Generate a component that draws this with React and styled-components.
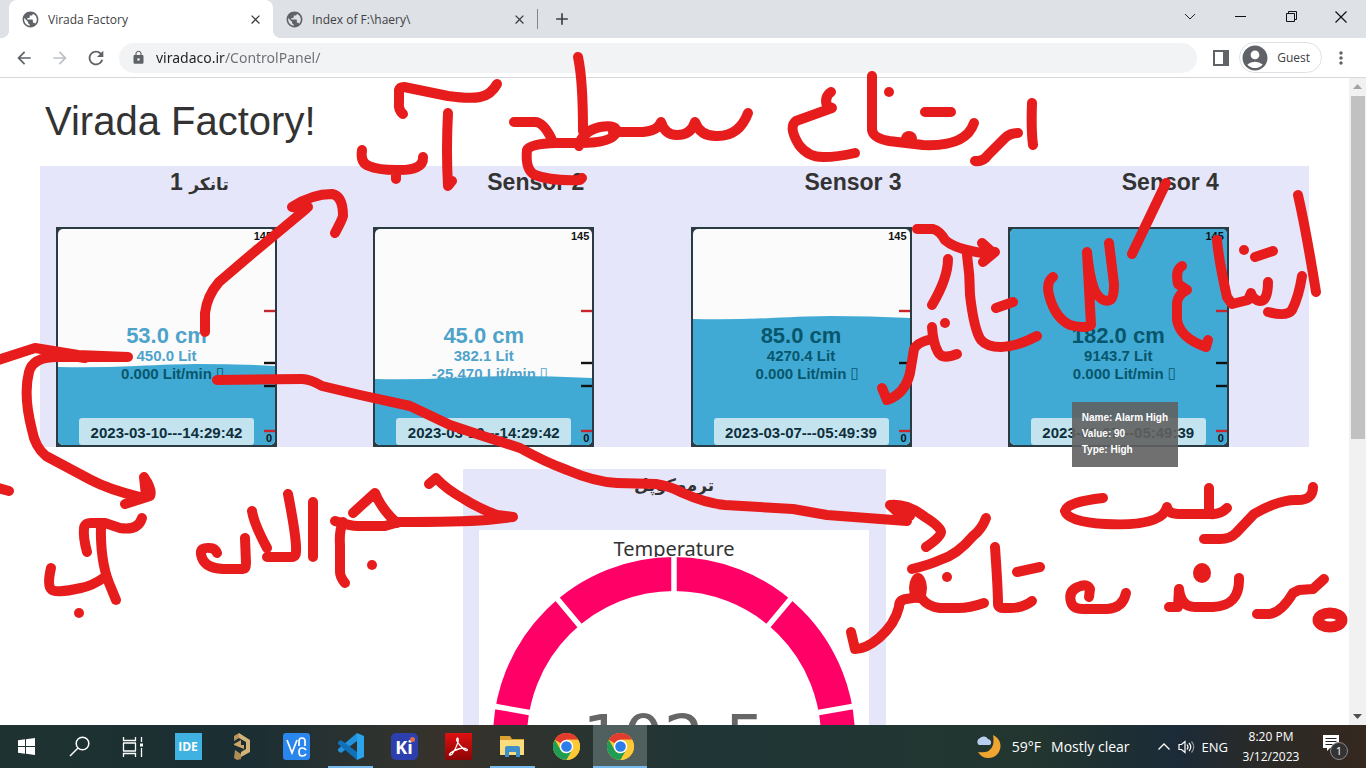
import React from "react";
import styled, { createGlobalStyle } from "styled-components";
import {
  MdPublic, MdLock, MdArrowBack, MdArrowForward, MdRefresh, MdMoreVert, MdAccountCircle, MdClose, MdAdd,
} from "react-icons/md";

const Global = createGlobalStyle`
  * { box-sizing: border-box; }
  body { margin: 0; background: #fff; font-family: "Liberation Sans", Arial, sans-serif; }
  button { border: 0; background: none; padding: 0; margin: 0; font: inherit; color: inherit; }
  h1, h2, h3 { margin: 0; }
`;

const uiFont = `"Open Sans", "Noto Sans", sans-serif`;

const Screen = styled.div`
  position: relative;
  display: flex;
  flex-direction: column;
  height: 100vh;
  overflow: hidden;
`;

/* ---------- browser frame ---------- */
const TabStrip = styled.div`
  display: flex;
  height: 38px;
  flex: none;
  padding-left: 9px;
  background: #dee1e6;
  font-family: ${uiFont};
`;
const Tab = styled.div`
  position: relative;
  display: flex;
  align-items: center;
  width: 264px;
  height: 38px;
  padding: 0 10px 0 12px;
  border-radius: 8px 8px 0 0;
  background: ${(p) => (p.$active ? "#fff" : "transparent")};
  color: #3c4043;
  font-size: 12px;
  svg { flex: none; }
  &::before, &::after {
    content: "";
    display: ${(p) => (p.$active ? "block" : "none")};
    position: absolute;
    bottom: 0;
    width: 8px;
    height: 8px;
  }
  &::before { left: -8px; background: radial-gradient(circle at 0 0, transparent 8px, #fff 8px); }
  &::after { right: -8px; background: radial-gradient(circle at 100% 0, transparent 8px, #fff 8px); }
`;
const TabTitle = styled.button`
  flex: 1;
  padding-left: 8px;
  text-align: left;
  white-space: nowrap;
`;
const IconButton = styled.button`
  display: flex;
  align-items: center;
  justify-content: center;
  flex: none;
  width: ${(p) => p.$w || 36}px;
  height: ${(p) => p.$h || 30}px;
  color: ${(p) => p.$color || "#5f6368"};
`;
const NewTab = styled(IconButton)`
  align-self: center;
  height: 20px;
  width: 48px;
  border-left: 1px solid #80868b;
`;
const WindowButtons = styled.div`
  display: flex;
  margin-left: auto;
  height: 33px;
`;
const Toolbar = styled.div`
  display: flex;
  align-items: center;
  flex: none;
  height: 40px;
  padding: 0 6px 0 6px;
  border-bottom: 1px solid #d5d7da;
  background: #fff;
  font-family: ${uiFont};
`;
const Address = styled.label`
  display: flex;
  flex: 1;
  align-items: center;
  gap: 10px;
  height: 30px;
  margin: 0 6px 0 5px;
  padding-left: 12px;
  border-radius: 15px;
  background: #f1f3f4;
  color: #5f6368;
`;
const UrlInput = styled.input`
  flex: 1;
  border: 0;
  padding: 0;
  outline: 0;
  font: 14px "Noto Sans", sans-serif;
  color: transparent;
  background: linear-gradient(to right, #202124 69px, #6a6e73 69px);
  -webkit-background-clip: text;
  background-clip: text;
`;
const Profile = styled.button`
  display: flex;
  align-items: center;
  gap: 7px;
  height: 31px;
  padding: 0 11px 0 0;
  border: 1px solid #dfe1e5;
  border-radius: 16px;
  color: #3c4043;
  font-size: 12px;
  svg { color: #5f6368; }
`;

/* ---------- page ---------- */
const Viewport = styled.div`
  display: flex;
  flex: 1;
  min-height: 0;
`;
const Page = styled.main`
  flex: 1;
  min-width: 0;
  overflow: hidden;
  padding: 20px 40px 0;
  color: #333;
`;
const PageTitle = styled.h1`
  padding-left: 5px;
  height: 68px;
  font-size: 40px;
  line-height: 46px;
  font-weight: 400;
`;
const TankRow = styled.section`
  display: grid;
  grid-template-columns: repeat(4, 1fr);
  background: #e6e6fa;
`;
const TankCell = styled.article`
  padding-left: 16px;
`;
const PanelTitle = styled.h2`
  height: 32px;
  margin-bottom: 29px;
  padding-left: 114px;
  font-size: 23px;
  line-height: 32px;
  white-space: nowrap;
`;
const Persian = styled.span`
  font-family: "DejaVu Sans", sans-serif;
  font-size: 17px;
`;
const TankBox = styled.div`
  position: relative;
  display: flex;
  flex-direction: column;
  align-items: center;
  width: 221px;
  height: 220px;
  padding-top: 98px;
`;
const TankDrawing = styled.svg`
  position: absolute;
  inset: 0;
`;
const Reading = styled.div`
  position: relative;
  font-size: ${(p) => (p.$big ? 22 : 15)}px;
  line-height: ${(p) => (p.$big ? 22 : 18)}px;
  font-weight: 700;
  color: ${(p) => (p.$wet ? "#08566c" : "#4fa3ca")};
  white-space: nowrap;
`;
const UnitBox = styled.span`
  position: absolute;
  left: 100%;
  padding-left: 4px;
  font: 15px/16px "DejaVu Sans", sans-serif;
`;
const Stamp = styled.time`
  position: relative;
  width: 175px;
  height: 27px;
  margin-top: 35px;
  border-radius: 3px;
  background: #c3e3ef;
  color: #0f2f3c;
  font-size: 15px;
  line-height: 29px;
  font-weight: 700;
  text-align: center;
`;
const ScaleLabel = styled.span`
  position: absolute;
  right: 5px;
  ${(p) => (p.$bottom ? "bottom: 2px" : "top: 3px")};
  color: #111;
  font-size: 11px;
  line-height: 13px;
  font-weight: 700;
`;
const Tooltip = styled.div`
  position: absolute;
  left: 64px;
  top: 175px;
  padding: 8px 10px 9px;
  background: rgba(97, 97, 97, 0.9);
  color: #fff;
  font-size: 10px;
  line-height: 16px;
  font-weight: 700;
  white-space: nowrap;
`;
const ThermoPanel = styled.section`
  width: calc(100% / 3);
  margin: 22px auto 0;
  padding: 0 17px 16px 16px;
  background: #e6e6fa;
`;
const ThermoTitle = styled.h2`
  height: 32px;
  margin-bottom: 29px;
  line-height: 28px;
  text-align: center;
`;
const ThermoCard = styled.div`
  display: flex;
  flex-direction: column;
  align-items: center;
  background: #fff;
`;
const ThermoLabel = styled.h3`
  height: 27px;
  padding-top: 7px;
  font: 400 20px/24px "Noto Sans", sans-serif;
`;
const Dial = styled.svg`
  background: #fff;
`;
const Scrollbar = styled.div`
  display: flex;
  flex-direction: column;
  align-items: center;
  flex: none;
  width: 17px;
  background: #f1f1f1;
`;
const Thumb = styled.div`
  width: 14px;
  height: 53%;
  margin-bottom: auto;
  background: #c1c1c1;
`;

/* ---------- taskbar ---------- */
const Taskbar = styled.footer`
  display: flex;
  flex: none;
  height: 43px;
  color: #fff;
  font-family: ${uiFont};
  background: linear-gradient(to right, #1e3331 0, #1b2e33 18%, #2b3230 26%, #38322a 33%, #2d332f 40%, #1f3536 52%, #213632 66%, #23352f 76%, #1b2b38 86%, #2a2a28 92%, #35281f 100%);
`;
const Apps = styled.nav`
  display: flex;
  padding-left: 2px;
`;
const TaskButton = styled.button`
  display: flex;
  align-items: center;
  justify-content: center;
  width: ${(p) => (p.$system ? 53 : 54)}px;
  background: ${(p) => (p.$active ? "#50605f" : "transparent")};
  position: relative;
  &::after {
    content: "";
    display: ${(p) => (p.$open ? "block" : "none")};
    position: absolute;
    bottom: 0;
    left: ${(p) => (p.$active ? 0 : 5)}px;
    right: ${(p) => (p.$active ? 0 : 4)}px;
    height: 2px;
    background: #76b9ed;
  }
`;
const Tile = styled.span`
  display: flex;
  align-items: center;
  justify-content: center;
  position: relative;
  width: 27px;
  height: 27px;
  border-radius: ${(p) => p.$r || 0}px;
  background: ${(p) => p.$bg};
  font: 700 ${(p) => p.$size}px ${uiFont};
`;
const KiDot = styled.i`
  position: absolute;
  top: 4px;
  right: 3px;
  width: 5px;
  height: 5px;
  border-radius: 50%;
  background: #d9704a;
`;
const Tray = styled.div`
  display: flex;
  align-items: center;
  margin-left: auto;
  padding-right: 17px;
  font-size: 12px;
`;
const Weather = styled.button`
  display: flex;
  align-items: center;
  gap: 10px;
  margin-right: 26px;
  font-size: 14px;
  white-space: nowrap;
`;
const Language = styled.button`
  font-size: 13px;
`;
const Clock = styled.button`
  width: 60px;
  margin: 0 20px 0 13px;
  font-size: 12px;
  line-height: 20px;
  text-align: center;
  white-space: nowrap;
`;
const Ink = styled.svg`
  position: absolute;
  inset: 0;
  width: 100%;
  height: 100%;
  pointer-events: none;
`;

const ChromeLogo = () => (
  <svg width="27" height="27" viewBox="0 0 48 48">
    <circle cx="24" cy="24" r="24" fill="#fcc934" />
    <path d="M24 24 3.200 12A24 24 0 0 1 44.800 12H24z" fill="#e33b2e" />
    <path d="M3.200 12 13.600 30A12 12 0 0 0 24 36L34.400 30 24 48A24 24 0 0 1 3.200 12z" fill="#1f9d55" />
    <path d="M24 24h10.400v6L24 48a24 24 0 0 0 20.800-36H24z" fill="#fcc934" />
    <circle cx="24" cy="24" r="12" fill="#fff" />
    <circle cx="24" cy="24" r="9.400" fill="#2b7de9" />
  </svg>
);

const systemButtons = [
  ["Start", <svg width="17" height="17" viewBox="0 0 17 17" fill="#fff"><path d="M0 2.300 7 1.300V8H0zM8 1.200 17 0v8H8zM0 9h7v6.700l-7-1zM8 9h9v8l-9-1.200z" /></svg>],
  ["Search", <svg width="21" height="21" viewBox="0 0 21 21" fill="none" stroke="#fff" strokeWidth="1.500"><circle cx="13.500" cy="7.500" r="6.300" /><path d="M9 12 1 20" /></svg>],
  ["Task view", <svg width="22" height="20" viewBox="0 0 22 20" fill="none" stroke="#fff" strokeWidth="1.300"><path d="M1.500 0v3.500h12V0M1.500 20v-3.500h12V20M1.500 6v8M13.500 6v8M1 6h13M1 14h13M19.500 0v5M19.500 11v9" /><path d="M18 6.500h3v3h-3z" fill="#fff" stroke="none" /></svg>],
];

const apps = [
  { name: "IDE", icon: <Tile $bg="#3fb2e2" $size={12}>IDE</Tile> },
  { name: "Altium", icon: (
    <svg width="18" height="27" viewBox="0 0 18 27"><path d="M6 0 17 7v12L8 24V19l5-3V9L6 5z" fill="#d3b377" /><path d="M1 3 6 0v5L1 8z" fill="#b9935a" /><path d="M1 11 8 7v5h3v4L1 12z" fill="#c9a664" /><path d="M2 17 8 21v5l-4 1-3-2z" fill="#b08d55" /></svg>
  ) },
  { name: "VNC", icon: (
    <Tile $bg="#2a86ec" $r={3}>
      <svg width="23" height="23" viewBox="0 0 23 23" fill="none" stroke="#fff" strokeWidth="1.700"><path d="m2 5 5 13L12 5M14 11V6q0-3 3-3t3 3v5M21 15q-1-2-4-2-3 0-3 4t3 4q3 0 4-2" /></svg>
    </Tile>
  ) },
  { name: "Visual Studio Code", open: true, icon: (
    <svg width="27" height="27" viewBox="0 0 27 27"><path d="M20 0 27 3v21l-7 3z" fill="#2ba4ec" /><path d="M20 0v8L4 20l-3-2v-2z" fill="#2392dc" /><path d="M20 27v-8L4 7 1 9v2z" fill="#1071b8" /></svg>
  ) },
  { name: "KiCad", icon: <Tile $bg="#2d3fae" $r={5} $size={18}>Ki<KiDot /></Tile> },
  { name: "Acrobat", icon: (
    <Tile $bg="linear-gradient(#e01010, #8c0505)" $r={1}>
      <svg width="20" height="19" viewBox="0 0 20 19" fill="none" stroke="#fff" strokeWidth="1.300"><path d="M9.500 1c-3 2 3 8 6 11s5 1 3 0c-3-2-11 0-16 4-3 3 1 3 3-1C8 11 12 2 9.500 1z" /></svg>
    </Tile>
  ) },
  { name: "File Explorer", open: true, icon: (
    <svg width="25" height="21" viewBox="0 0 25 21"><path d="M0 0h10l2 3h12v16H0z" fill="#dba233" /><path d="M0 4h24v15H0z" fill="#f9dc7d" /><path d="M5 21V12q0-2 2-2h11q2 0 2 2v9h-4v-5H9v5z" fill="#3f8fc9" /></svg>
  ) },
  { name: "Chrome", icon: <ChromeLogo /> },
  { name: "Chrome window", open: true, active: true, icon: <ChromeLogo /> },
];

const tanks = [
  { title: "1", persian: "تانکر", cm: "53.0", lit: "450.0", rate: "0.000", stamp: "2023-03-10---14:29:42", level: 140, wet: 1 },
  { title: "Sensor 2", cm: "45.0", lit: "382.1", rate: "-25.470", stamp: "2023-03-10---14:29:42", level: 152, wet: 0 },
  { title: "Sensor 3", cm: "85.0", lit: "4270.4", rate: "0.000", stamp: "2023-03-07---05:49:39", level: 92, wet: 3 },
  { title: "Sensor 4", cm: "182.0", lit: "9143.7", rate: "0.000", stamp: "2023-03-07---05:49:39", level: 0, wet: 3, tip: true },
];

const ticks = [[84, "#c8252c"], [136, "#111"], [159, "#111"], [204, "#c8252c"]];

function Tank({ data, index }) {
  const y = data.level;
  return (
    <TankCell>
      <PanelTitle>{data.persian ? <bdo dir="ltr">{data.title} <Persian lang="fa" dir="rtl">{data.persian}</Persian></bdo> : data.title}</PanelTitle>
      <TankBox>
        <TankDrawing width="221" height="220" viewBox="0 0 221 220" aria-hidden="true">
          <clipPath id={`tank${index}`}><rect x="2" y="2" width="217" height="216" rx="5" /></clipPath>
          <rect width="221" height="220" fill="#2b3b43" />
          <g clipPath={`url(#tank${index})`}>
            <rect width="221" height="220" fill="#fbfbfb" />
            <path d={y ? `M0 ${y}Q40 ${y + 1} 80 ${y - 1}T140 ${y - 3}Q180 ${y - 3} 221 ${y - 1}V220H0z` : "M0 0H221V220H0z"} fill="#40aad5" />
          </g>
          {ticks.map(([ty, color]) => <path key={ty} d={`M208 ${ty}h11`} stroke={color} strokeWidth="2.400" />)}
        </TankDrawing>
        <ScaleLabel>145</ScaleLabel>
        <ScaleLabel $bottom>0</ScaleLabel>
        <Reading $big $wet={data.wet > 2}>{data.cm} cm</Reading>
        <Reading $wet={data.wet > 1}>{data.lit} Lit</Reading>
        <Reading $wet={data.wet > 0}>{data.rate} Lit/min<UnitBox>▯</UnitBox></Reading>
        <Stamp>{data.stamp}</Stamp>
        {data.tip && <Tooltip role="tooltip">Name: Alarm High<br />Value: 90<br />Type: High</Tooltip>}
      </TankBox>
    </TankCell>
  );
}

const gaps = [0, 40, 80, 120, 160, 200, 240, 280, 320];

const strokes = [
  "M403 114Q398 110 399 102V90Q400 87 404 87L448 96Q470 99 480 97 491 95 497 84",
  "M448 113Q446 150 448 186L452 181",
  "M362 150Q360 163 369 166 378 170 396 170 424 171 423 157M396 170v9",
  "M514 122H535Q544 122 553 142M578 57Q583 80 583 131M579 146Q582 131 600 127 618 124 616 133 611 143 580 143H556Q529 144 527 150 525 170 535 175 550 181 580 180L582 178",
  "M613 132H635Q657 133 661 122 665 135 677 135 691 135 695 122 700 136 716 136 739 137 748 113",
  "M831 92Q824 97 827 106L832 108 796 121Q788 127 799 145 808 157 823 157 838 157 855 153",
  "M872 76V130Q873 138 889 141L923 145Q966 147 974 123M909 138v5M925 112H951",
  "M1018 133Q1010 133 1005 138L988 155Q983 162 975 161M1032 103Q1031 130 1033 145",
  "M205 332V313Q207 296 219 282L253 253 306 209 292 207Q312 194 332 194 343 196 343 216 342 220 335 233M300 207h8",
  "M-5 361 35 348 78 355 128 357H60Q33 356 29 372 23 395 32 430 35 447 46 456L91 480Q110 490 140 497M125 504 150 496Q153 490 144 477L146 496M60 354l25 4M-5 487 9 491",
  "M217 380 302 379Q310 379 322 386L360 395 410 406 450 425 480 435 520 448Q545 462 567 470 595 482 617 483L656 484Q670 486 683 493 705 503 725 505L793 509 827 515 867 518 907 521 890 505Q907 503 925 517 941 527 941 532 941 537 926 547M900 508l10 8",
  "M917 229H933Q940 231 945 240 955 249 982 253L995 252 983 262M982 243 992 252",
  "M948 259Q948 278 932 305M967 255Q970 275 970 295 974 330 981 340 987 347 1001 347 1016 347 1037 336M996 308 1013 302",
  "M932 327Q933 343 938 352 942 360 957 354M928 340Q917 343 914 349L910 373Q905 394 887 400L882 388",
  "M1053 277Q1046 282 1049 295 1055 318 1070 325 1085 329 1091 325L1087 252Q1090 282 1096 293 1103 303 1110 300 1114 299 1114 284L1109 243M1166 183 1132 254",
  "M1182 266Q1175 270 1178 284L1187 290Q1178 294 1177 303V320Q1180 338 1206 347L1208 340",
  "M1217 240Q1219 262 1227 297L1232 304 1248 300 1251 293Q1253 300 1260 301 1268 301 1268 282M1255 257 1273 251M1302 276Q1299 296 1292 310 1287 317 1268 312M1298 195Q1306 230 1316 292",
  "M87 552Q83 537 84 529 84 523 91 523H105L120 528Q138 531 142 518M101 525Q100 560 109 583L116 600M51 568Q47 585 51 589 54 594 81 588 92 586 105 577",
  "M217 553Q215 548 210 548 200 547 201 554 203 568 223 569H243Q246 569 246 563L245 538M252 511Q254 524 267 548M288 494Q297 540 296 552 296 557 292 557H267M313 502V557",
  "M335 521Q350 526 358 526H385L399 522Q460 522 487 520L513 517 497 515Q480 509 464 499 446 489 436 478L429 484M353 513 375 493Q382 510 397 523M343 522Q339 531 340 545V572Q340 577 345 583",
  "M1313 487Q1313 500 1298 500 1280 499 1254 514L1236 533Q1230 539 1220 539H1204",
  "M1103 498Q1067 502 1065 511 1068 522 1105 524 1162 527 1167 507 1168 514 1179 514H1210Q1220 515 1227 508M1209 488V511",
  "M986 518Q982 529 973 536 957 555 940 560 929 565 912 569M918 579Q916 605 940 608H958Q970 608 984 603M920 597 906 599Q899 600 899 607 895 624 879 638 866 649 855 649L851 632",
  "M995 547Q998 590 998 604 998 608 1004 608H1010Q1023 608 1032 601M1017 572 1040 567",
  "M1089 597 1090 589Q1087 583 1078 587 1068 591 1071 602 1073 609 1083 609H1107Q1123 608 1126 593",
  "M1169 607H1178L1179 589Q1181 607 1195 607H1213Q1240 606 1239 578M1257 614H1269Q1281 613 1293 593L1299 590 1313 589 1324 579",
];
const dots = [[889, 92, 5], [909, 139, 8], [945, 323, 5], [1244, 250, 5], [79, 613, 5], [372, 565, 5], [947, 577, 5]];

export default function App() {
  return (
    <Screen>
      <Global />
      <TabStrip>
        <Tab $active>
          <MdPublic size={19} color="#5f6368" />
          <TabTitle>Virada Factory</TabTitle>
          <IconButton $w={16} $color="#3c4043" aria-label="Close tab"><MdClose size={15} /></IconButton>
        </Tab>
        <Tab>
          <MdPublic size={19} color="#5f6368" />
          <TabTitle>Index of F:\haery\</TabTitle>
          <IconButton $w={16} $color="#3c4043" aria-label="Close tab"><MdClose size={15} /></IconButton>
        </Tab>
        <NewTab $color="#3c4043" aria-label="New tab"><MdAdd size={20} /></NewTab>
        <WindowButtons>
          <IconButton $w={51} $h={33} aria-label="Search tabs"><svg width="12" height="7" viewBox="0 0 12 7" fill="none" stroke="#222"><path d="m1 1 5 5 5-5" /></svg></IconButton>
          <IconButton $w={51} $h={33} aria-label="Minimize"><svg width="11" height="2" viewBox="0 0 11 2"><path d="M0 0h11v1H0z" fill="#111" /></svg></IconButton>
          <IconButton $w={50} $h={33} aria-label="Restore"><svg width="11" height="11" viewBox="0 0 11 11" fill="none" stroke="#111"><path d="M.5 2.500h8v8h-8zM2.500 2.500v-2h8v8h-2" /></svg></IconButton>
          <IconButton $w={50} $h={33} aria-label="Close window"><svg width="12" height="12" viewBox="0 0 12 12" stroke="#111" strokeWidth="1.200"><path d="m.5.5 11 11m0-11-11 11" /></svg></IconButton>
        </WindowButtons>
      </TabStrip>
      <Toolbar>
        <IconButton aria-label="Back"><MdArrowBack size={20} /></IconButton>
        <IconButton $color="#bdc1c6" aria-label="Forward"><MdArrowForward size={20} /></IconButton>
        <IconButton aria-label="Reload"><MdRefresh size={22} /></IconButton>
        <Address>
          <MdLock size={15} />
          <UrlInput aria-label="Address" defaultValue="viradaco.ir/ControlPanel/" />
        </Address>
        <IconButton aria-label="Side panel"><svg width="16" height="16" viewBox="0 0 16 16"><path d="M0 0h16v16H0zM2 2v12h8V2z" fill="#5f6368" fillRule="evenodd" /></svg></IconButton>
        <Profile><MdAccountCircle size={30} />Guest</Profile>
        <IconButton $w={38} aria-label="Menu"><MdMoreVert size={20} /></IconButton>
      </Toolbar>

      <Viewport>
        <Page>
          <PageTitle>Virada Factory!</PageTitle>
          <TankRow>{tanks.map((t, i) => <Tank key={t.title} data={t} index={i} />)}</TankRow>
          <ThermoPanel>
            <ThermoTitle><Persian lang="fa" dir="rtl">ترموکوپل</Persian></ThermoTitle>
            <ThermoCard>
              <ThermoLabel>Temperature</ThermoLabel>
              <Dial width="362" height="362" viewBox="-181 -181 362 362">
                <circle r="164" fill="none" stroke="#ff0066" strokeWidth="34" />
                {gaps.map((a) => <path key={a} d="M0-184V-144" stroke="#fff" strokeWidth="5.500" transform={`rotate(${a})`} />)}
                <text y="23" textAnchor="middle" fontFamily="DejaVu Sans, sans-serif" fontSize="64" fill="#666">102.5</text>
              </Dial>
            </ThermoCard>
          </ThermoPanel>
        </Page>
        <Scrollbar aria-hidden="true">
          <svg width="17" height="18" viewBox="0 0 17 18"><path d="m4 11 4.500-5 4.500 5z" fill="#a3a3a3" /></svg>
          <Thumb />
          <svg width="17" height="17" viewBox="0 0 17 17"><path d="m4 6 4.500 5L13 6z" fill="#505050" /></svg>
        </Scrollbar>
      </Viewport>

      <Taskbar>
        {systemButtons.map(([name, icon]) => <TaskButton key={name} $system aria-label={name}>{icon}</TaskButton>)}
        <Apps>
          {apps.map((a) => <TaskButton key={a.name} $open={a.open} $active={a.active} aria-label={a.name}>{a.icon}</TaskButton>)}
        </Apps>
        <Tray>
          <Weather>
            <svg width="26" height="26" viewBox="0 0 26 26"><path d="M17 1a12 12 0 1 1-15 17Q14 20 17 11 18 6 17 1z" fill="#f0a431" /><path d="M3 11a4 4 0 0 1 1-7 5 5 0 0 1 8 1 3.500 3.500 0 0 1 2 6z" fill="#b9cff0" /></svg>
            <span>59°F</span><span>Mostly clear</span>
          </Weather>
          <IconButton $w={16} aria-label="Hidden icons"><svg width="12" height="7" viewBox="0 0 12 7" fill="none" stroke="#fff" strokeWidth="1.300"><path d="m.5 6.500 5.500-5.500 5.500 5.500" /></svg></IconButton>
          <IconButton $w={30} aria-label="Volume"><svg width="17" height="14" viewBox="0 0 17 14" fill="none" stroke="#fff" strokeWidth="1.200"><path d="M1 4.500h2.500L7 1.500v11L3.500 9.500H1zM9 4.500q2 2.500 0 5M11 3q3.500 4 0 8" /><path d="M13.500 1.500q4.500 5.500 0 11" opacity=".5" /></svg></IconButton>
          <Language>ENG</Language>
          <Clock>8:20 PM<br />3/12/2023</Clock>
          <IconButton $w={28} aria-label="Notifications">
            <svg width="28" height="28" viewBox="0 0 28 28"><path d="M2 2h16v13H9l-3 3v-3H2z" fill="#fff" /><path d="M4.500 5.500h11M4.500 8.500h11M4.500 11.500h7" stroke="#222" /><circle cx="18" cy="18" r="8.500" fill="#333" stroke="#8a8a8a" /><text x="18" y="22" textAnchor="middle" fill="#fff" fontSize="11" fontFamily="Open Sans">1</text></svg>
          </IconButton>
        </Tray>
      </Taskbar>

      <Ink viewBox="0 0 1366 768" aria-hidden="true">
        <g fill="none" stroke="#e71c1c" strokeWidth="10" strokeLinecap="round" strokeLinejoin="round">
          {strokes.map((d) => <path key={d} d={d} />)}
          <ellipse cx="1330" cy="620" rx="12" ry="7" strokeWidth="11" />
        </g>
        <g fill="#e71c1c">
          {dots.map(([x, y, r]) => <circle key={x} cx={x} cy={y} r={r} />)}
          <ellipse cx="918" cy="588" rx="9" ry="15" />
          <ellipse cx="1202" cy="573" rx="9" ry="10" />
        </g>
      </Ink>
    </Screen>
  );
}
